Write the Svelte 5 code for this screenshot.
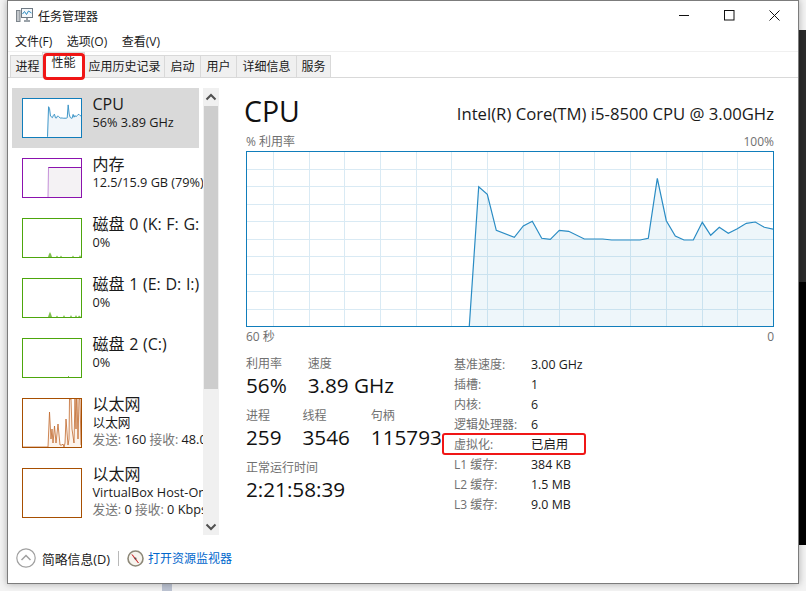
<script lang="ts">
	const menus = ['文件(F)', '选项(O)', '查看(V)'];
	const tabs = [
		{ label: '进程', width: 33 },
		{ label: '性能', width: 43, active: true },
		{ label: '应用历史记录', width: 81 },
		{ label: '启动', width: 37 },
		{ label: '用户', width: 37 },
		{ label: '详细信息', width: 61 },
		{ label: '服务', width: 35 }
	];

	// cpu history, in page coordinates of the big graph
	const cpu = [
		[469.3, 326], [478.7, 186.7], [487.3, 194.3], [496.3, 230.3], [514.3, 237.3], [523.3, 226],
		[532.3, 221.3], [541.7, 238.3], [550.3, 239.3], [559.3, 230.3], [568.7, 231.3], [584.3, 239],
		[602.7, 239], [611.7, 240], [640, 240], [648.3, 238.3], [657.3, 178.3], [666.3, 220.7],
		[675.3, 236], [684, 240], [693.3, 240], [702.3, 222.3], [710.7, 235.3], [719.3, 227.3],
		[728.3, 233.3], [737.3, 228.7], [746.3, 223.3], [755.3, 222], [764.3, 227.3], [773.3, 229.3]
	];
	const bigLine = cpu.map(([x, y]) => `${x - 247},${y - 152}`).join(' ');
	const bigFill = `${bigLine} 526,177 526,174`;
	const smallLine = cpu.map(([x, y]) => `${((x - 246) / 528) * 58},${((y - 151) / 176) * 38}`).join(' ');
	const smallFill = `${smallLine} 58,38 24.5,38`;

	const gridRows = [169, 186, 204, 221, 239, 256, 274, 291, 309];
	const gridCols = [273, 309, 344, 380, 416, 451, 487, 523, 559, 594, 630, 666, 702, 737];

	const disk0 = '0,38 25,38 26,35 27,33.5 28,35 29,38 33,38 34,36.5 35,38 37,38 38,36.5 39,38 49,38 50,36.5 51,38 56,38 57,36 58,38';
	const disk1 = '0,38 25,38 26,35 27,32.5 28,35 29,38 33,38 34,36.5 35,38 40,38 41,36 42,38 47,38 48,36 49,38 52,38 53,36 54,38 55,38 56,36.5 58,38';
	const eth = '0,48 25,48 26.5,13 28,40 29,30 30,44 31.5,27 33,44 35,25 37,46 39,46 40,45 41,48 42,44 43,20 45,46 46,40 46.5,0 48,0 49,30 51,44 52,0 53,30 53.5,0 54,0 55,40 56,0 57,0 58,46';
	const ethFill = `${eth} 58,48`;

	const specs = [
		['基准速度:', '3.00 GHz'],
		['插槽:', '1'],
		['内核:', '6'],
		['逻辑处理器:', '6'],
		['虚拟化:', '已启用', true],
		['L1 缓存:', '384 KB'],
		['L2 缓存:', '1.5 MB'],
		['L3 缓存:', '9.0 MB']
	];
</script>

<div class="desktop">
	<div class="wallpaper-strip"></div>
	<div class="taskbar-chip"></div>

	<div class="window">
		<header class="titlebar">
			<svg class="app-icon" width="17" height="15" viewBox="0 0 17 15">
				<rect x="0.5" y="2.5" width="3.5" height="11" fill="#c4c8cc" stroke="#7d858c" />
				<rect x="5.5" y="0.5" width="11" height="9" fill="#f4f8fb" stroke="#6f7a84" />
				<polyline points="6.5,6 8.5,3.5 10.5,6.5 12.5,3 15.5,5" fill="none" stroke="#2f8bc0" />
				<path d="M10 10 h2 v2 h2 v2 h-6 v-2 h2z" fill="#9aa2a9" />
			</svg>
			<span class="title">任务管理器</span>
			<div class="controls">
				<button aria-label="最小化">
					<svg width="11" height="11" viewBox="0 0 11 11"><path d="M0 5.5h10" stroke="#111" /></svg>
				</button>
				<button aria-label="最大化">
					<svg width="11" height="11" viewBox="0 0 11 11"><rect x="0.5" y="0.5" width="9.5" height="9.5" fill="none" stroke="#111" /></svg>
				</button>
				<button aria-label="关闭">
					<svg width="11" height="11" viewBox="0 0 11 11"><path d="M0.5 0.5l10 10M10.5 0.5l-10 10" stroke="#111" /></svg>
				</button>
			</div>
		</header>

		<nav class="menu">
			{#each menus as item}
				<span>{item}</span>
			{/each}
		</nav>

		<div class="tabs">
			{#each tabs as tab}
				<div class="tab" class:active={tab.active} style="width: {tab.width}px">{tab.label}</div>
			{/each}
		</div>

		<main class="body">
			<aside class="side">
				<div class="list">
					<div class="item selected">
						<svg class="thumb cpu" width="60" height="40" viewBox="0 0 58 38">
							<polygon points={smallFill} fill="#f1f6fa" />
							<polyline points={smallLine} fill="none" stroke="#3f97c9" />
						</svg>
						<div class="info">
							<div class="name">CPU</div>
							<div class="sub">56% 3.89 GHz</div>
						</div>
					</div>
					<div class="item">
						<svg class="thumb mem" width="60" height="40" viewBox="0 0 58 38">
							<polygon points="25,38 25.5,8 58,8 58,38" fill="#f4f2f4" />
							<path d="M25 38 L25.5 8" stroke="#c48fd8" fill="none" />
							<path d="M25.5 8.5 H58" stroke="#8b12ae" fill="none" />
						</svg>
						<div class="info">
							<div class="name">内存</div>
							<div class="sub">12.5/15.9 GB (79%)</div>
						</div>
					</div>
					<div class="item">
						<svg class="thumb disk" width="60" height="40" viewBox="0 0 58 38"><polygon points={disk0} fill="#7fbf4f" /></svg>
						<div class="info">
							<div class="name">磁盘 0 (K: F: G:</div>
							<div class="sub">0%</div>
						</div>
					</div>
					<div class="item">
						<svg class="thumb disk" width="60" height="40" viewBox="0 0 58 38"><polygon points={disk1} fill="#7fbf4f" /></svg>
						<div class="info">
							<div class="name">磁盘 1 (E: D: I:)</div>
							<div class="sub">0%</div>
						</div>
					</div>
					<div class="item">
						<svg class="thumb disk" width="60" height="40" viewBox="0 0 58 38"><path d="M45.5 38v-1" stroke="#7fbf4f" /></svg>
						<div class="info">
							<div class="name">磁盘 2 (C:)</div>
							<div class="sub">0%</div>
						</div>
					</div>
					<div class="item tall">
						<svg class="thumb net" width="60" height="50" viewBox="0 0 58 48">
							<polygon points={ethFill} fill="#fcf3eb" />
							<polyline points={eth} fill="none" stroke="#c0682c" stroke-width="0.8" />
						</svg>
						<div class="info">
							<div class="name">以太网</div>
							<div class="sub">以太网</div>
							<div class="sub"><em>发送:</em> 160 <em>接收:</em> 48.0 Kbps</div>
						</div>
					</div>
					<div class="item tall">
						<svg class="thumb net" width="60" height="50" viewBox="0 0 58 48"></svg>
						<div class="info">
							<div class="name">以太网</div>
							<div class="sub">VirtualBox Host-Only Network</div>
							<div class="sub"><em>发送:</em> 0 <em>接收:</em> 0 Kbps</div>
						</div>
					</div>
				</div>
				<div class="scrollbar">
					<svg width="16" height="18" viewBox="0 0 16 18"><path d="M3.5 11.5l4.5-4.5 4.5 4.5" fill="none" stroke="#505050" stroke-width="2" /></svg>
					<div class="scroll-thumb"></div>
					<svg class="down" width="16" height="15" viewBox="0 0 16 15"><path d="M3.5 4.5l4.5 4.5 4.5-4.5" fill="none" stroke="#505050" stroke-width="2" /></svg>
				</div>
			</aside>

			<section class="detail">
				<div class="head">
					<h1>CPU</h1>
					<span class="model">Intel(R) Core(TM) i5-8500 CPU @ 3.00GHz</span>
				</div>
				<div class="axis top"><span>% 利用率</span><span>100%</span></div>
				<svg class="graph" width="526" height="174" viewBox="0 0 526 174">
					{#each gridRows as y}
						<line x1="0" x2="526" y1={y - 151.5} y2={y - 151.5} stroke="#d9eaf4" />
					{/each}
					{#each gridCols as x}
						<line y1="0" y2="174" x1={x - 246.5} x2={x - 246.5} stroke="#d9eaf4" />
					{/each}
					<polygon points={bigFill} fill="#117dbb" fill-opacity="0.07" />
					<polyline points={bigLine} fill="none" stroke="#2a8cc4" stroke-width="1.2" />
				</svg>
				<div class="axis bottom"><span>60 秒</span><span>0</span></div>

				<div class="stats">
					<div class="live">
						<div class="row">
							<div class="stat"><label>利用率</label><b>56%</b></div>
							<div class="stat"><label>速度</label><b>3.89 GHz</b></div>
						</div>
						<div class="row">
							<div class="stat"><label>进程</label><b>259</b></div>
							<div class="stat"><label>线程</label><b>3546</b></div>
							<div class="stat"><label>句柄</label><b>115793</b></div>
						</div>
						<div class="row">
							<div class="stat"><label>正常运行时间</label><b>2:21:58:39</b></div>
						</div>
					</div>
					<div class="specs">
						{#each specs as [label, value, marked]}
							<div class="spec" class:marked>
								<span class="key">{label}</span>
								<span class="val">{value}</span>
							</div>
						{/each}
					</div>
				</div>
			</section>
		</main>

		<footer class="footer">
			<svg width="20" height="20" viewBox="0 0 20 20">
				<circle cx="10" cy="10" r="9.2" fill="#fff" stroke="#a0a0a0" stroke-width="1.2" />
				<path d="M5.5 12l4.5-4.5 4.5 4.5" fill="none" stroke="#a0a0a0" stroke-width="1.5" />
			</svg>
			<span class="less">简略信息(D)</span>
			<span class="divider"></span>
			<svg width="17" height="17" viewBox="0 0 17 17">
				<circle cx="8.5" cy="8.5" r="7.5" fill="#f7f4ee" stroke="#8d8878" stroke-width="1.6" />
				<path d="M5 4.5l3 4.5 3.5 4-3-4.5z" fill="#c8262a" stroke="#c8262a" stroke-width="0.7" />
				<circle cx="8.5" cy="8.5" r="1" fill="#555" />
			</svg>
			<span class="link">打开资源监视器</span>
		</footer>
	</div>
</div>

<style>
	:global(body) {
		background: #f3f3f3;
		overflow: hidden;
	}
	.desktop {
		position: relative;
		height: 591px;
		box-sizing: border-box;
		padding: 0 7px 7px 7px;
		font-family: 'Open Sans', 'Noto Sans CJK SC', sans-serif;
		font-size: 12px;
		color: #1a1a1a;
	}
	.wallpaper-strip {
		position: absolute;
		right: 0;
		top: 30px;
		width: 7px;
		height: 515px;
		background: linear-gradient(#2b2b2b 0 49%, #000 49% 100%);
	}
	.taskbar-chip {
		position: absolute;
		left: 162px;
		bottom: 0;
		width: 10px;
		height: 7px;
		background: #bcc3d2;
	}
	.window {
		position: relative;
		display: flex;
		flex-direction: column;
		width: 792px;
		height: 584px;
		box-sizing: border-box;
		background: #fff;
		border: 1px solid #7c7c7c;
		box-shadow: 0 0 7px rgba(0, 0, 0, 0.3);
	}
	.titlebar {
		display: flex;
		align-items: center;
		height: 29px;
		padding-left: 8px;
		flex: none;
	}
	.app-icon {
		margin-right: 5px;
	}
	.title {
		font-size: 12px;
	}
	.controls {
		display: flex;
		margin-left: auto;
		padding-right: 1px;
	}
	.controls button {
		display: flex;
		align-items: center;
		justify-content: center;
		width: 45px;
		height: 29px;
		padding: 0;
		border: 0;
		background: none;
	}
	.menu {
		display: flex;
		gap: 14.5px;
		height: 19px;
		padding: 2px 0 0 7px;
		align-items: center;
		line-height: 19px;
		flex: none;
	}
	.tabs {
		display: flex;
		height: 27px;
		box-sizing: border-box;
		padding: 3px 0 0 2px;
		border-top: 1px solid #f0f0f0;
		border-bottom: 1px solid #d9d9d9;
		flex: none;
	}
	.tab {
		position: relative;
		box-sizing: border-box;
		height: 22px;
		line-height: 21px;
		text-align: center;
		background: #f0f0f0;
		border: 1px solid #d9d9d9;
		border-bottom: 0;
		margin-left: -1px;
	}
	.tab:first-child {
		margin-left: 0;
		padding-left: 2px;
	}
	.tab.active {
		background: #fff;
		height: 25px;
		margin-top: -3px;
		line-height: 19px;
		z-index: 1;
	}
	.tab.active::after {
		content: '';
		position: absolute;
		left: 0;
		right: -1px;
		top: 0;
		height: 27px;
		box-sizing: border-box;
		border: 3px solid #f01616;
		border-radius: 4px;
	}
	.body {
		display: flex;
		flex: 1;
		min-height: 0;
	}
	.side {
		display: flex;
		margin: 10px 0 0 4px;
		height: 447px;
		flex: none;
	}
	.list {
		width: 191px;
		overflow: hidden;
	}
	.item {
		display: flex;
		width: 187px;
		height: 60px;
		white-space: nowrap;
	}
	.item.tall {
		height: 70px;
	}
	.item.selected {
		background: #d9d9d9;
	}
	.thumb {
		display: block;
		flex: none;
		box-sizing: border-box;
		margin: 10px 10.5px 0 10px;
		background: #fff;
		border: 1px solid;
	}
	.thumb.cpu {
		border-color: #117dbb;
	}
	.thumb.mem {
		border-color: #8b12ae;
	}
	.thumb.disk {
		border-color: #4da60c;
	}
	.thumb.net {
		border-color: #a74f01;
	}
	.info {
		padding-top: 6px;
	}
	.name {
		font-size: 16px;
		word-spacing: 0.5px;
		line-height: 20px;
	}
	.sub {
		font-size: 12.7px;
		line-height: 17px;
	}
	.sub em {
		font-style: normal;
		color: #777;
	}
	.scrollbar {
		display: flex;
		flex-direction: column;
		width: 16px;
		background: #f0f0f0;
	}
	.scrollbar svg {
		display: block;
		flex: none;
	}
	.scroll-thumb {
		height: 283px;
		margin: 0 1px;
		background: #cdcdcd;
	}
	.scrollbar .down {
		margin-top: auto;
	}
	.detail {
		flex: 1;
		margin-left: 26px;
		margin-right: 24px;
		min-width: 0;
	}
	.head {
		display: flex;
		align-items: center;
		justify-content: space-between;
		height: 54px;
		padding-top: 11px;
		box-sizing: border-box;
	}
	h1 {
		margin: 0 0 0 -1px;
		font-size: 28.5px;
		font-weight: 400;
		line-height: 40px;
		color: #111;
	}
	.model {
		font-size: 16.7px;
		line-height: 22px;
		margin-top: 6px;
	}
	.axis {
		display: flex;
		justify-content: space-between;
		line-height: 16px;
		color: #707070;
	}
	.axis.top {
		margin-top: 2px;
		padding-left: 1px;
		height: 17px;
	}
	.axis.bottom {
		height: 28px;
		padding-left: 1px;
		padding-top: 2px;
		box-sizing: border-box;
	}
	.graph {
		display: block;
		margin-left: 1px;
		box-sizing: content-box;
		border: 1px solid #117dbb;
	}
	.stats {
		display: flex;
		padding: 1px 0 0 1px;
	}
	.live {
		width: 208px;
		flex: none;
	}
	.row {
		display: flex;
		gap: 21px;
		margin-bottom: 9px;
		white-space: nowrap;
	}
	.stat label {
		display: block;
		line-height: 15px;
		color: #707070;
	}
	.stat b {
		display: block;
		font-size: 20.7px;
		font-weight: 400;
		line-height: 28px;
		color: #111;
	}
	.specs {
		margin-top: -1.5px;
	}
	.spec {
		position: relative;
		display: flex;
		height: 20px;
		line-height: 20px;
		white-space: nowrap;
	}
	.key {
		width: 77px;
		color: #707070;
	}
	.val {
		font-size: 12.4px;
	}
	.spec.marked::after {
		content: '';
		position: absolute;
		left: -12px;
		top: -1.5px;
		width: 144px;
		height: 22px;
		box-sizing: border-box;
		border: 2.5px solid #f01616;
		border-radius: 3px;
	}
	.footer {
		display: flex;
		align-items: center;
		height: 48px;
		padding: 0 0 2px 8px;
		box-sizing: border-box;
		flex: none;
	}
	.less {
		margin-left: 6px;
		font-size: 12.8px;
	}
	.divider {
		width: 1px;
		height: 15px;
		margin: 0 8px;
		background: #b9b9b9;
	}
	.link {
		margin-left: 4px;
		color: #0066cc;
	}
</style>
